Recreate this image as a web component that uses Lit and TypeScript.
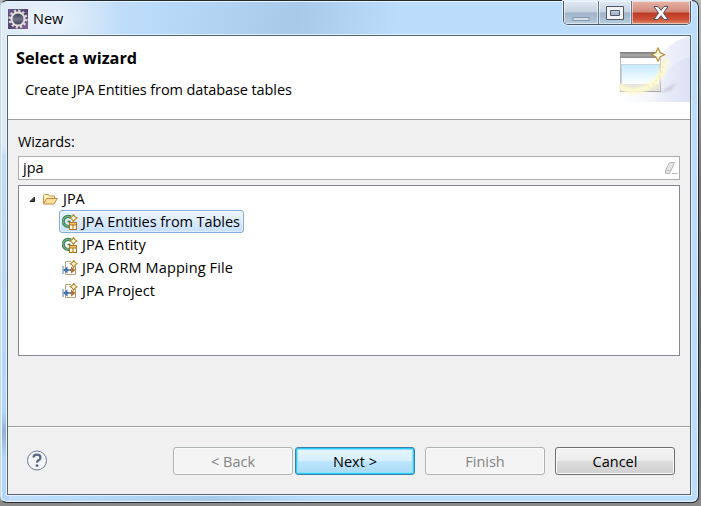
import { LitElement, html, css, svg } from "lit";
import { customElement } from "lit/decorators.js";

const star = (x: number, y: number, r: number, inner = 0.33) => svg`
  <path d="M${x} ${y - r}L${x + r * inner} ${y - r * inner}L${x + r} ${y}L${x + r * inner} ${y + r * inner}L${x} ${y + r}L${x - r * inner} ${y + r * inner}L${x - r} ${y}L${x - r * inner} ${y - r * inner}Z"
    fill="#fffbe0" stroke="#b5862c" stroke-width="1.1"/>`;

const gear = html`<svg width="20" height="20" viewBox="0 0 20 20">
  <defs>
    <linearGradient id="g" x1="0" x2="1" y1="0" y2="1"><stop offset="0" stop-color="#6a5a90"/><stop offset=".5" stop-color="#55446f"/><stop offset="1" stop-color="#8560a0"/></linearGradient>
    <linearGradient id="c" x1="0" x2="0" y1="0" y2="1"><stop offset="0" stop-color="#30304a"/><stop offset=".5" stop-color="#72758c"/><stop offset="1" stop-color="#3c3a55"/></linearGradient>
  </defs>
  <rect width="20" height="20" fill="url(#g)"/>
  <circle cx="10" cy="10" r="8.2" fill="none" stroke="#dcdad2" stroke-width="2.6" stroke-dasharray="2.2 2.09"/>
  <circle cx="10" cy="10" r="6.5" fill="url(#c)" stroke="#e2e0d8" stroke-width="2"/>
</svg>`;

const banner = html`<svg class="art" width="71" height="66" viewBox="0 0 71 66">
  <defs>
    <linearGradient id="b1" x1="0" x2="1"><stop offset="0" stop-color="#fff"/><stop offset=".5" stop-color="#f3f5fb"/><stop offset="1" stop-color="#e6eaf8"/></linearGradient>
    <linearGradient id="b4" x1="0" x2="1"><stop offset="0" stop-color="#d9dff3" stop-opacity="0"/><stop offset="1" stop-color="#d6dcf2"/></linearGradient>
    <linearGradient id="b2" x1="0" x2="0" y1="0" y2="1"><stop offset="0" stop-color="#c6eafb"/><stop offset="1" stop-color="#fff"/></linearGradient>
    <linearGradient id="b3" x1="0" x2="0" y1="0" y2="1"><stop offset="0" stop-color="#777"/><stop offset=".5" stop-color="#aaa"/><stop offset="1" stop-color="#888"/></linearGradient>
    <filter id="bl" x="-30%" y="-30%" width="160%" height="160%"><feGaussianBlur stdDeviation="1.4"/></filter>
  </defs>
  <path d="M71 0C58 3 48 10 40 22L0 52V66H71Z" fill="url(#b1)"/>
  <path d="M71 21Q55 25 44 40L30 66H71Z" fill="url(#b4)" opacity=".6"/>
  <path d="M40 57L57 47L52 54L38 58Z" fill="#a89fb8" opacity=".5" filter="url(#bl)"/>
  <rect x="1.5" y="17" width="40" height="38.5" fill="#fff" stroke="#b9bbc0"/>
  <rect x="1" y="16" width="38" height="6" fill="url(#b3)"/>
  <rect x="2.5" y="28.5" width="38" height="20" fill="url(#b2)" stroke="#c9d6de"/>
  <rect x="2" y="48" width="39" height="7" fill="#e6e4da"/>
  <path d="M1 55.5H42" stroke="#a9a9a4"/>
  <path d="M-1 49Q12 60 29 51Q45 42 46 23" fill="none" stroke="#fffad0" stroke-width="6" opacity=".95" filter="url(#bl)"/>
  <path d="M29 51.5Q44 42 45 24" fill="none" stroke="#f7e6b0" stroke-width="2" stroke-dasharray="1.8 3.2" opacity=".75"/>
  ${star(39, 18.7, 6.6)}
</svg>`;

const folder = html`<svg width="16" height="16" viewBox="0 0 16 16">
  <path d="M1.5 12.5V4.5L2.5 3.5H6.5L7.5 5H12.5V8" fill="#fff0c2" stroke="#c8904a"/>
  <path d="M1.5 13L4.5 7.5H15.3L12 13Z" fill="#ffdf9c" stroke="#c4873a"/>
</svg>`;

const entity = html`<svg width="16" height="16" viewBox="0 0 16 16">
  <path d="M9 3.2A5 5 0 1 0 7.5 12.2" fill="none" stroke="#3c8655" stroke-width="3.2"/>
  <path d="M8.8 3.3A4.9 4.9 0 1 0 7.2 12" fill="none" stroke="#86bb95" stroke-width="1"/>
  <path d="M5.5 7.5H8.5" stroke="#34814f" stroke-width="1.6"/>
  <rect x="7" y="8" width="8" height="8" fill="#b06f1c"/>
  <path d="M8 9H14V10.5H8Z" fill="#f3c978"/><path d="M8 11.5H10.5V15H8ZM11.5 11.5H14V15H11.5Z" fill="#fff8dc"/>
  ${star(11.5, 4, 3.5, 0.4)}
</svg>`;

const mapping = html`<svg width="16" height="16" viewBox="0 0 16 16">
  <path d="M3.5 14.5V1.5H9L13.5 6V14.5Z" fill="#fafbfd" stroke="#b3a67e"/>
  <path d="M1 6V14" stroke="#5580b5"/>
  <path d="M5.5 6.5L1 10L5.5 13.5Z" fill="#3b72b4"/>
  <path d="M5 10H10" stroke="#33486b" stroke-width="1.3"/>
  <path d="M9 6.5L13.5 10L9 13.5Z" fill="#b06f38"/><path d="M13.5 6.5V14" stroke="#b98c4c"/>
  ${star(11.7, 3.8, 3.4, 0.4)}
</svg>`;

@customElement("app-root")
export class AppRoot extends LitElement {
  static styles = css`
    :host { display: block; width: 701px; height: 506px; overflow: hidden; background: linear-gradient(#b8b9ba, #737577 35%, #6a6a6c 80%, #8a8a8a); font: 14.5px/20px "Open Sans", "Noto Sans", sans-serif; color: #000; }
    * { box-sizing: border-box; }
    svg { display: block; flex: none; }
    .window { width: 699px; height: 503px; border: 1px solid #242a35; border-left-color: #c6d9e8; border-radius: 7px; padding: 0 7px 7px 6px; background: linear-gradient(#e1ebf500, #e1eaf4 8%, #e1eaf4 29%, #c2dcf3 31%, #b3d5f8 82%, #94b2d3 86%, #b3d5f8 91%) left / 8px 100% no-repeat, radial-gradient(ellipse at 45px 19px, #eef4faee, #eef4fa00 75px), linear-gradient(100deg, #d3e4f5, #badbfa 19%, #a9c9e8 38%, #bbdcfb 51%, #bbdcfb); box-shadow: inset 0 0 0 1px #e9f4fd; }
    .title { height: 34px; display: flex; align-items: center; padding-left: 1px; }
    .title > svg { margin-top: 1px; }
    .name { margin: 2px 0 0 5px; flex: 1; }
    .controls { display: flex; flex: none; align-self: flex-start; height: 24px; width: 128px; border: 1px solid #4b5867; border-top: 0; border-radius: 0 0 5px 5px; overflow: hidden; box-shadow: 0 0 0 1px #e0effc; }
    .control { display: grid; place-items: center; width: 35px; border-right: 1px solid #657b90; background: linear-gradient(#e1e9f3, #c6d2df 48%, #9fb3ca 52%, #b8cddf); box-shadow: inset 0 0 0 1px #ffffff80; }
    .control.max { width: 33px; }
    .control.close { width: 58px; border: 0; background: linear-gradient(#e7b5a8, #d18778 48%, #bd3926 52%, #cc5037 80%, #df8e6c); }
    .client { height: 460px; border: 1px solid #526475; background: #f0f0f0; display: flex; flex-direction: column; box-shadow: 0 0 0 1px #e5f2fd; }
    .head { height: 84px; flex: none; display: flex; justify-content: space-between; background: #fff; border-bottom: 1px solid #a0a0a0; }
    h1 { font-size: 16.25px; line-height: 22px; margin: 11px 0 11px 8px; font-weight: 700; }
    p { margin: 0 0 0 17px; letter-spacing: -0.1px; }
    .body { height: 307px; padding: 12px 10px 0; border-bottom: 1px solid #a0a0a0; box-shadow: 0 1px #fff; }
    .label { letter-spacing: -0.1px; }
    .field { height: 24px; margin-top: 4px; border: 1px solid #abadb3; background: #fff; padding: 0 1px 0 4px; display: flex; align-items: center; justify-content: space-between; }
    .tree { height: 171px; margin-top: 5px; border: 1px solid #828790; background: #fff; padding: 1px 10px; }
    .row { height: 23px; display: flex; align-items: center; gap: 4px; }
    .row > :last-child { margin-left: 1px; }
    .item { height: 23px; margin-left: 30px; width: max-content; display: flex; align-items: center; gap: 4px; padding: 0 3px 0 2px; border: 1px solid transparent; border-radius: 3px; }
    .item.selected { border-color: #84acdd; background: linear-gradient(#edf5fe, #c7dffc); box-shadow: inset 0 0 0 1px #f3f9ff80; letter-spacing: -0.06px; }
    .item.wide { letter-spacing: 0.12px; }
    .foot { flex: 1; display: flex; align-items: center; padding: 1px 15px 0 18px; }
    .buttons { margin-left: auto; display: flex; }
    .button { width: 120px; height: 28px; padding-top: 1px; border: 1px solid #707070; border-radius: 3px; display: grid; place-items: center; background: linear-gradient(#f3f3f3, #ebebeb 48%, #dddddd 51%, #cfcfcf); box-shadow: inset 0 0 0 1px #fafafa; margin-left: 10px; }
    .disabled { border-color: #adb2b5; background: #f4f4f4; color: #838383; }
    .next { margin-left: 2px; border-color: #3c7fb1; background: linear-gradient(#e7f6fd, #d6effc 48%, #bee6fd 51%, #a7d9f5); box-shadow: inset 0 0 0 1px #2fcbf8, inset 0 0 0 2px #8ae2fa; }
  `;

  render() {
    return html`<div class="window">
      <div class="title">${gear}<span class="name"><span>New</span></span>
        <div class="controls">
          <div class="control"><svg width="18" height="18"><rect x="1" y="13.5" width="16" height="3" fill="#d5e0e9" stroke="#8597a9"/></svg></div>
          <div class="control max"><svg width="18" height="14"><path d="M.5 .5H17.5V13.5H.5ZM4.5 4.5V9.5H13.5V4.5Z" fill="#f1f3f5" fill-rule="evenodd" stroke="#505968"/></svg></div>
          <div class="control close"><svg width="16" height="16"><path d="M1 1.5H5L8 5.3L11 1.5H15L10.5 8L15 14.5H11L8 10.7L5 14.5H1L5.5 8Z" fill="#f4f4f4" stroke="#51535e"/></svg></div>
        </div>
      </div>
      <div class="client">
        <div class="head"><div><h1><span>Select a wizard</span></h1><p><span>Create JPA Entities from database tables</span></p></div>${banner}</div>
        <div class="body">
          <div class="label"><span>Wizards:</span></div>
          <div class="field"><span>jpa</span><svg width="14" height="14"><path d="M1.5 9.5L5 2.5Q5.5 1.5 6.5 1.5H10.5L7 9.5L5.5 12.5H1.5Z" fill="#e6e6e6" stroke="#b4b4b4"/><path d="M1.5 9.5H6.5" fill="none" stroke="#c0c0c0"/><path d="M8 12.5H13.5" stroke="#b5b5b5"/></svg></div>
          <div class="tree">
            <div class="row"><svg width="9" height="8"><path d="M1 6.5L5.5 2V6.5Z" fill="#444" stroke="#222"/></svg>${folder}<span>JPA</span></div>
            <div class="item selected">${entity}<span>JPA Entities from Tables</span></div>
            <div class="item">${entity}<span>JPA Entity</span></div>
            <div class="item wide">${mapping}<span>JPA ORM Mapping File</span></div>
            <div class="item">${mapping}<span>JPA Project</span></div>
          </div>
        </div>
        <div class="foot"><svg width="22" height="22"><circle cx="11" cy="10.5" r="9.5" fill="#f5f5f6" stroke="#6c7997"/><path d="M7.5 7.6Q7.5 4.7 11 4.7Q14.5 4.7 14.5 7.5Q14.5 9.2 12.5 10.2Q11 11.1 11 12.8" fill="none" stroke="#576688" stroke-width="2.2"/><circle cx="11" cy="15.6" r="1.4" fill="#576688"/></svg>
          <div class="buttons"><div class="button disabled"><span>&lt; Back</span></div><div class="button next"><span>Next &gt;</span></div><div class="button disabled"><span>Finish</span></div><div class="button"><span>Cancel</span></div></div>
        </div>
      </div>
    </div>`;
  }
}
